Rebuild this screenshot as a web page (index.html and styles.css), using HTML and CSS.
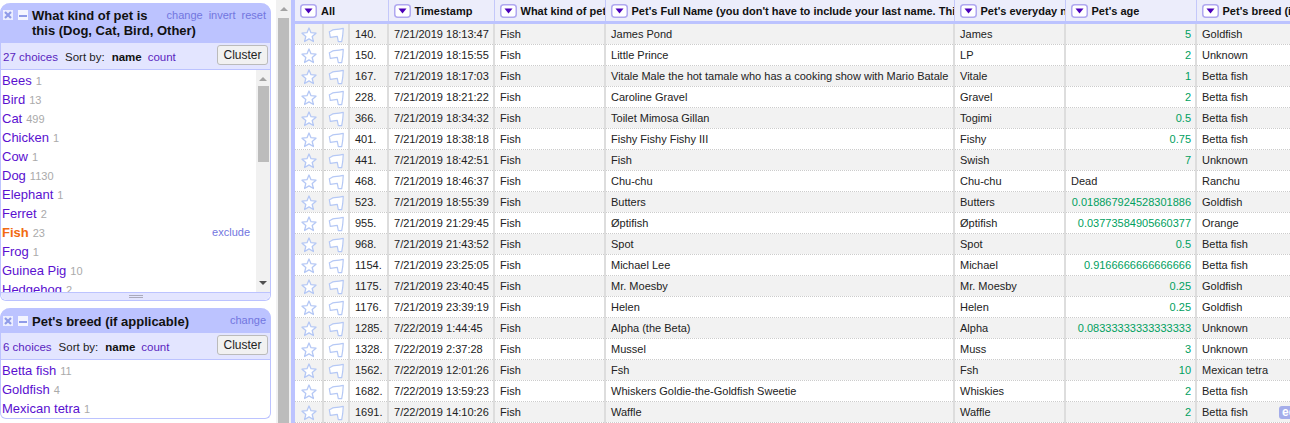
FILE: index.html
```html
<!DOCTYPE html>
<html lang="en">
<head>
    <meta charset="UTF-8">
    <title>Pets - OpenRefine</title>
    <link rel="stylesheet" href="styles.css">
</head>
<body>

<svg class="icon-defs" width="0" height="0">
    <symbol id="star" viewBox="0 0 16 16">
        <path d="M8 1l2 4.700 5 .5-3.800 3.300 1.200 5L8 11.900 3.600 14.500l1.200-5L1 6.200l5-.5z" fill="#fff" stroke="#b5c8f5" stroke-width="1.300" stroke-linejoin="round"/>
    </symbol>
    <symbol id="flag" viewBox="0 0 16 16">
        <path d="M2.300 10.300L1.300 4.700C3 4 4.500 2.800 6.300 2.700 9 2.500 12 2.200 15.300 1.300L14.700 8.700 13.700 14.700H10.300L9.300 9.300z" fill="#fff" stroke="#b5c8f5" stroke-width="1.200" stroke-linejoin="round"/>
    </symbol>
    <symbol id="caret" viewBox="0 0 17 14" preserveAspectRatio="none">
        <rect x=".75" y=".75" width="15.500" height="12.500" rx="3" fill="#fff" stroke="#b0a8f0" stroke-width="1.500"/>
        <path d="M4.500 4.500h8L8.500 9.500z" fill="#4b00b8"/>
    </symbol>
    <symbol id="close" viewBox="0 0 10 10">
        <rect width="10" height="10" fill="#eceeff"/>
        <path d="M2 2l6 6M8 2l-6 6" stroke="#8f9be8" stroke-width="2.200"/>
    </symbol>
    <symbol id="minus" viewBox="0 0 10 10">
        <rect width="10" height="10" fill="#f4f5ff"/>
        <rect x="1" y="5" width="8" height="2" fill="#8f9be8"/>
    </symbol>
</svg>

<div class="app">
    <aside class="facets">
        <section class="facet">
            <div class="facet-head">
                <svg class="facet-btn"><use href="#close"/></svg>
                <svg class="facet-btn"><use href="#minus"/></svg>
                <h3>What kind of pet is<br>this (Dog, Cat, Bird, Other)</h3>
                <div class="facet-links">
                    <a>change</a>
                    <a>invert</a>
                    <a>reset</a>
                </div>
            </div>
            <div class="facet-controls">
                <a class="purple">27 choices</a>
                <span class="sort-label">Sort by:</span>
                <b>name</b>
                <a class="purple">count</a>
                <button class="cluster">Cluster</button>
            </div>
            <div class="facet-body tall">
                <ul class="choices">
                    <li><a>Bees</a> <span>1</span></li>
                    <li><a>Bird</a> <span>13</span></li>
                    <li><a>Cat</a> <span>499</span></li>
                    <li><a>Chicken</a> <span>1</span></li>
                    <li><a>Cow</a> <span>1</span></li>
                    <li><a>Dog</a> <span>1130</span></li>
                    <li><a>Elephant</a> <span>1</span></li>
                    <li><a>Ferret</a> <span>2</span></li>
                    <li class="selected"><a>Fish</a> <span>23</span><em>exclude</em></li>
                    <li><a>Frog</a> <span>1</span></li>
                    <li><a>Guinea Pig</a> <span>10</span></li>
                    <li><a>Hedgehog</a> <span>2</span></li>
                </ul>
                <div class="scrollbar">
                    <i class="arrow up"></i>
                    <div class="track"><div class="thumb"></div></div>
                    <i class="arrow down"></i>
                </div>
            </div>
            <div class="facet-foot"><span></span></div>
        </section>

        <section class="facet">
            <div class="facet-head short">
                <svg class="facet-btn"><use href="#close"/></svg>
                <svg class="facet-btn"><use href="#minus"/></svg>
                <h3>Pet's breed (if applicable)</h3>
                <div class="facet-links">
                    <a>change</a>
                </div>
            </div>
            <div class="facet-controls">
                <a class="purple">6 choices</a>
                <span class="sort-label">Sort by:</span>
                <b>name</b>
                <a class="purple">count</a>
                <button class="cluster">Cluster</button>
            </div>
            <div class="facet-body">
                <ul class="choices">
                    <li><a>Betta fish</a> <span>11</span></li>
                    <li><a>Goldfish</a> <span>4</span></li>
                    <li><a>Mexican tetra</a> <span>1</span></li>
                </ul>
            </div>
        </section>
    </aside>

    <div class="page-scroll">
        <i class="arrow up"></i>
        <div class="track"></div>
    </div>

    <main class="view">
        <table class="data">
            <colgroup>
                <col class="c-star"><col class="c-flag"><col class="c-num"><col class="c-time"><col class="c-kind">
                <col class="c-full"><col class="c-nick"><col class="c-age"><col class="c-breed">
            </colgroup>
            <thead>
                <tr>
                    <th colspan="3"><div class="th"><svg class="caret"><use href="#caret"/></svg>All</div></th>
                    <th><div class="th"><svg class="caret"><use href="#caret"/></svg>Timestamp</div></th>
                    <th><div class="th"><svg class="caret"><use href="#caret"/></svg>What kind of pet</div></th>
                    <th><div class="th"><svg class="caret"><use href="#caret"/></svg>Pet's Full Name (you don't have to include your last name. This</div></th>
                    <th><div class="th"><svg class="caret"><use href="#caret"/></svg>Pet's everyday name</div></th>
                    <th><div class="th"><svg class="caret"><use href="#caret"/></svg>Pet's age</div></th>
                    <th><div class="th"><svg class="caret"><use href="#caret"/></svg>Pet's breed (if applicable)</div></th>
                </tr>
            </thead>
            <tbody>
                <tr><td class="ico"><svg><use href="#star"/></svg></td><td class="ico"><svg><use href="#flag"/></svg></td><td>140.</td><td>7/21/2019 18:13:47</td><td>Fish</td><td>James Pond</td><td>James</td><td class="num">5</td><td>Goldfish</td></tr>
                <tr><td class="ico"><svg><use href="#star"/></svg></td><td class="ico"><svg><use href="#flag"/></svg></td><td>150.</td><td>7/21/2019 18:15:55</td><td>Fish</td><td>Little Prince</td><td>LP</td><td class="num">2</td><td>Unknown</td></tr>
                <tr><td class="ico"><svg><use href="#star"/></svg></td><td class="ico"><svg><use href="#flag"/></svg></td><td>167.</td><td>7/21/2019 18:17:03</td><td>Fish</td><td>Vitale Male the hot tamale who has a cooking show with Mario Batale</td><td>Vitale</td><td class="num">1</td><td>Betta fish</td></tr>
                <tr><td class="ico"><svg><use href="#star"/></svg></td><td class="ico"><svg><use href="#flag"/></svg></td><td>228.</td><td>7/21/2019 18:21:22</td><td>Fish</td><td>Caroline Gravel</td><td>Gravel</td><td class="num">2</td><td>Betta fish</td></tr>
                <tr><td class="ico"><svg><use href="#star"/></svg></td><td class="ico"><svg><use href="#flag"/></svg></td><td>366.</td><td>7/21/2019 18:34:32</td><td>Fish</td><td>Toilet Mimosa Gillan</td><td>Togimi</td><td class="num">0.5</td><td>Betta fish</td></tr>
                <tr><td class="ico"><svg><use href="#star"/></svg></td><td class="ico"><svg><use href="#flag"/></svg></td><td>401.</td><td>7/21/2019 18:38:18</td><td>Fish</td><td>Fishy Fishy Fishy III</td><td>Fishy</td><td class="num">0.75</td><td>Betta fish</td></tr>
                <tr><td class="ico"><svg><use href="#star"/></svg></td><td class="ico"><svg><use href="#flag"/></svg></td><td>441.</td><td>7/21/2019 18:42:51</td><td>Fish</td><td>Fish</td><td>Swish</td><td class="num">7</td><td>Unknown</td></tr>
                <tr><td class="ico"><svg><use href="#star"/></svg></td><td class="ico"><svg><use href="#flag"/></svg></td><td>468.</td><td>7/21/2019 18:46:37</td><td>Fish</td><td>Chu-chu</td><td>Chu-chu</td><td>Dead</td><td>Ranchu</td></tr>
                <tr><td class="ico"><svg><use href="#star"/></svg></td><td class="ico"><svg><use href="#flag"/></svg></td><td>523.</td><td>7/21/2019 18:55:39</td><td>Fish</td><td>Butters</td><td>Butters</td><td class="num">0.018867924528301886</td><td>Goldfish</td></tr>
                <tr><td class="ico"><svg><use href="#star"/></svg></td><td class="ico"><svg><use href="#flag"/></svg></td><td>955.</td><td>7/21/2019 21:29:45</td><td>Fish</td><td>Øptifish</td><td>Øptifish</td><td class="num">0.03773584905660377</td><td>Orange</td></tr>
                <tr><td class="ico"><svg><use href="#star"/></svg></td><td class="ico"><svg><use href="#flag"/></svg></td><td>968.</td><td>7/21/2019 21:43:52</td><td>Fish</td><td>Spot</td><td>Spot</td><td class="num">0.5</td><td>Betta fish</td></tr>
                <tr><td class="ico"><svg><use href="#star"/></svg></td><td class="ico"><svg><use href="#flag"/></svg></td><td>1154.</td><td>7/21/2019 23:25:05</td><td>Fish</td><td>Michael Lee</td><td>Michael</td><td class="num">0.9166666666666666</td><td>Betta fish</td></tr>
                <tr><td class="ico"><svg><use href="#star"/></svg></td><td class="ico"><svg><use href="#flag"/></svg></td><td>1175.</td><td>7/21/2019 23:40:45</td><td>Fish</td><td>Mr. Moesby</td><td>Mr. Moesby</td><td class="num">0.25</td><td>Goldfish</td></tr>
                <tr><td class="ico"><svg><use href="#star"/></svg></td><td class="ico"><svg><use href="#flag"/></svg></td><td>1176.</td><td>7/21/2019 23:39:19</td><td>Fish</td><td>Helen</td><td>Helen</td><td class="num">0.25</td><td>Goldfish</td></tr>
                <tr><td class="ico"><svg><use href="#star"/></svg></td><td class="ico"><svg><use href="#flag"/></svg></td><td>1285.</td><td>7/22/2019 1:44:45</td><td>Fish</td><td>Alpha (the Beta)</td><td>Alpha</td><td class="num">0.08333333333333333</td><td>Unknown</td></tr>
                <tr><td class="ico"><svg><use href="#star"/></svg></td><td class="ico"><svg><use href="#flag"/></svg></td><td>1328.</td><td>7/22/2019 2:37:28</td><td>Fish</td><td>Mussel</td><td>Muss</td><td class="num">3</td><td>Unknown</td></tr>
                <tr><td class="ico"><svg><use href="#star"/></svg></td><td class="ico"><svg><use href="#flag"/></svg></td><td>1562.</td><td>7/22/2019 12:01:26</td><td>Fish</td><td>Fsh</td><td>Fsh</td><td class="num">10</td><td>Mexican tetra</td></tr>
                <tr><td class="ico"><svg><use href="#star"/></svg></td><td class="ico"><svg><use href="#flag"/></svg></td><td>1682.</td><td>7/22/2019 13:59:23</td><td>Fish</td><td>Whiskers Goldie-the-Goldfish Sweetie</td><td>Whiskies</td><td class="num">2</td><td>Betta fish</td></tr>
                <tr><td class="ico"><svg><use href="#star"/></svg></td><td class="ico"><svg><use href="#flag"/></svg></td><td>1691.</td><td>7/22/2019 14:10:26</td><td>Fish</td><td>Waffle</td><td>Waffle</td><td class="num">2</td><td class="has-tag">Betta fish<span class="edit-tag">edit</span></td></tr>
            </tbody>
        </table>
    </main>
</div>

</body>
</html>
```

FILE: styles.css
```css
html, body {
    margin: 0;
    height: 100%;
    overflow: hidden;
}
body {
    font-family: "Liberation Sans", Arial, sans-serif;
    font-size: 11px;
    color: #222;
    background: #fff;
}
.icon-defs {
    position: absolute;
}
.app {
    display: flex;
    height: 423px;
}

/* left side facets */
.facets {
    flex: none;
    width: 271px;
    padding-top: 3px;
    margin-right: 5px;
}
.facet {
    border: 1px solid #bcc3ff;
    border-top: none;
    border-radius: 10px 10px 6px 6px;
    margin-bottom: 7px;
    background: #fff;
}
.facet-head {
    display: flex;
    align-items: flex-start;
    background: #bcc3ff;
    border-radius: 10px 10px 0 0;
    height: 40px;
    padding: 0 0 0 3px;
    margin: 0 -1px;
    position: relative;
}
.facet-head.short {
    height: 25px;
}
.facet-head h3 {
    margin: 5px 0 0 0;
    font-size: 13px;
    line-height: 15px;
    white-space: nowrap;
    color: #111;
}
.facet-head.short h3 {
    margin-top: 6px;
}
.facet-btn {
    flex: none;
    width: 10px;
    height: 10px;
    margin: 7px 4px 0 0;
}
.facet-btn + .facet-btn {
    margin-left: 1px;
}
.facet-head.short .facet-btn {
    margin-top: 8px;
}
.facet-links {
    position: absolute;
    right: 5px;
    top: 6px;
    display: flex;
    gap: 6px;
    font-size: 11px;
    color: #7276e0;
}
.facet-controls {
    display: flex;
    align-items: center;
    height: 27px;
    padding: 1px 2px 0;
    font-size: 11.5px;
    background: #e3e5ff;
    border-bottom: 1px solid #bcc3ff;
    box-sizing: border-box;
}
.purple {
    color: #5a1fc0;
}
.sort-label {
    margin: 0 7px 0 7px;
}
.facet-controls b {
    margin-right: 6px;
    color: #111;
}
.cluster {
    margin-left: auto;
    margin-top: -3px;
    height: 20px;
    width: 51px;
    padding: 0;
    font: 12px "Liberation Sans", Arial, sans-serif;
    color: #222;
    background: #f1f1f1;
    border: 1px solid #bbb;
    border-radius: 3px;
}
.facet-body {
    display: flex;
}
.facet-body.tall {
    height: 222px;
    overflow: hidden;
}
.choices {
    flex: 1;
    margin: 0;
    padding: 1px 6px 0 1px;
    list-style: none;
    overflow: hidden;
}
.choices li {
    display: flex;
    align-items: baseline;
    gap: 4px;
    height: 19px;
    line-height: 19px;
    font-size: 13px;
    white-space: nowrap;
}
.choices a {
    color: #5a10d0;
}
.choices span {
    font-size: 11px;
    color: #aaa;
}
.selected a {
    color: #f26a10;
    font-weight: bold;
}
.selected em {
    margin-left: auto;
    font-style: normal;
    font-size: 11px;
    color: #7276e0;
    position: relative;
    top: -1px;
}
.scrollbar {
    flex: none;
    width: 14px;
    display: flex;
    flex-direction: column;
    background: #f1f1f1;
}
.track {
    flex: 1;
}
.thumb {
    background: #bcbcbc;
}
.scrollbar .thumb {
    height: 76px;
    margin: 0 1px 0 2px;
}
.arrow {
    display: block;
    flex: none;
    height: 16px;
    position: relative;
}
.arrow::after {
    content: "";
    position: absolute;
    left: 3px;
    border-left: 4px solid transparent;
    border-right: 4px solid transparent;
}
.arrow.up::after {
    top: 7px;
    border-bottom: 4px solid #a3a3a3;
}
.arrow.down::after {
    top: 5px;
    border-top: 4px solid #505050;
}
.facet-foot {
    height: 8px;
    box-sizing: border-box;
    background: #e3e5ff;
    border-top: 1px solid #bcc3ff;
    border-radius: 0 0 6px 6px;
    display: flex;
    justify-content: center;
    align-items: center;
}
.facet-foot span {
    width: 14px;
    height: 1px;
    border-top: 1px solid #aab;
    border-bottom: 1px solid #aab;
}

/* gray strip between panels */
.page-scroll {
    flex: none;
    width: 15px;
    display: flex;
    flex-direction: column;
    background: #f1f1f1;
}
.page-scroll .arrow {
    height: 18px;
}
.page-scroll .arrow::after {
    left: 4px;
}
.page-scroll .track {
    margin: 0 2px;
    background: #bcbcbc;
}

/* data table */
.view {
    flex: 1;
    min-width: 0;
    overflow: hidden;
    border-left: 4px solid #bcc3ff;
}
.data {
    table-layout: fixed;
    width: 995px;
    border-collapse: collapse;
}
.c-star { width: 28px; }
.c-flag { width: 26px; }
.c-num { width: 39px; }
.c-time { width: 106px; }
.c-kind { width: 111px; }
.c-full { width: 349px; }
.c-nick { width: 111px; }
.c-age { width: 131px; }
.c-breed { width: 94px; }
.data th {
    height: 21px;
    padding: 0;
    background: #ecedfb;
    border-right: 1px solid #c4c8fa;
    border-bottom: 3px solid #bcc3ff;
    text-align: left;
    overflow: hidden;
}
.th {
    display: flex;
    align-items: center;
    gap: 4px;
    padding-left: 5px;
    white-space: nowrap;
    font-weight: bold;
    color: #111;
}
.caret {
    flex: none;
    width: 17px;
    height: 14px;
}
.data td {
    height: 20px;
    padding: 0 5px;
    border-right: 2px solid #ddd;
    border-bottom: 1px dotted #ccc;
    white-space: nowrap;
    overflow: hidden;
}
.data td:last-child, .data th:last-child {
    border-right: none;
}
.data tbody tr:nth-child(odd) td {
    background: #f2f2f2;
}
.data td.ico {
    padding: 0;
    text-align: center;
}
.ico svg {
    display: block;
    width: 16px;
    height: 16px;
    margin: 1px auto 0;
}
.data td.num {
    padding-right: 4px;
    text-align: right;
    color: #00a060;
}
.data td.has-tag {
    position: relative;
}
.edit-tag {
    position: absolute;
    left: 82px;
    top: 4px;
    padding: 0 3px;
    line-height: 13px;
    font-size: 12px;
    background: #a4adea;
    color: #fff;
    font-weight: bold;
    border-radius: 3px;
}
```
